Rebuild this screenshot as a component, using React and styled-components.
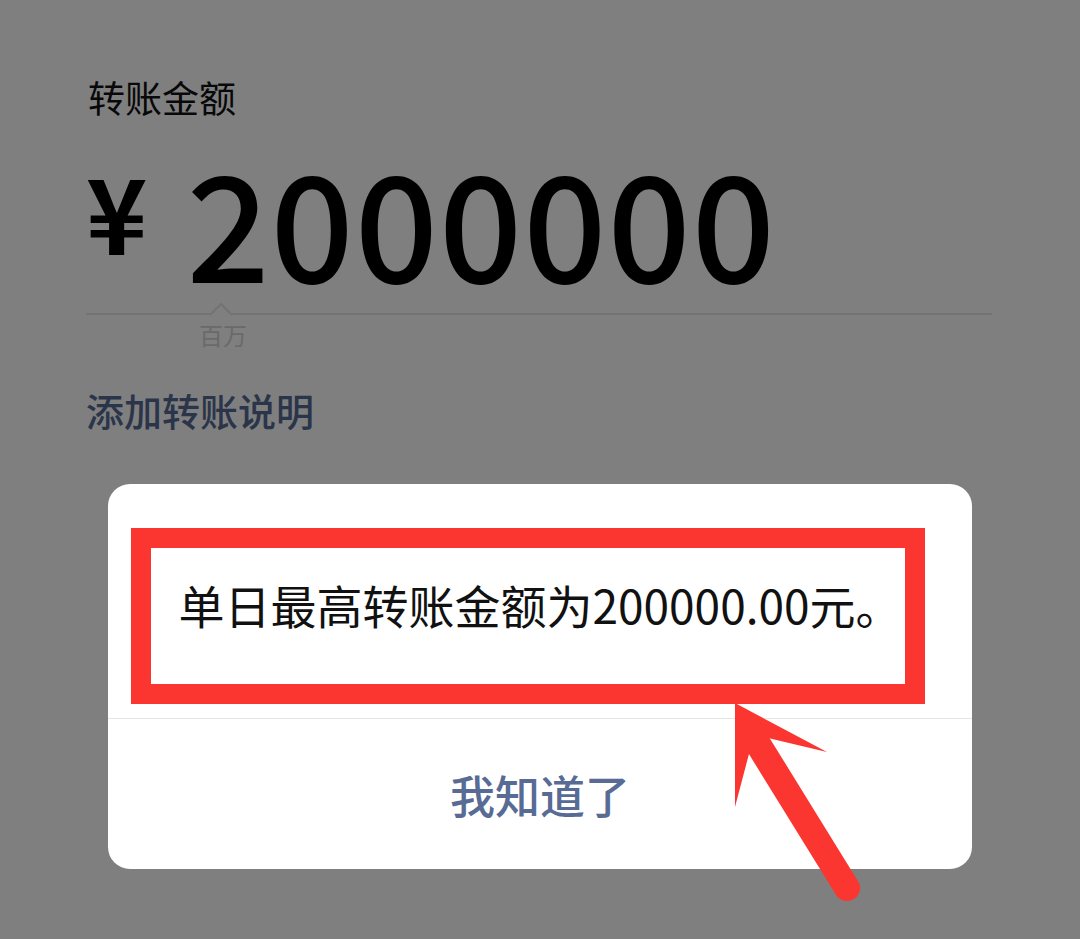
import styled, { createGlobalStyle } from 'styled-components';

const Global = createGlobalStyle`
  html, body {
    margin: 0;
    padding: 0;
    background: #808080;
  }
  body {
    font-family: "Noto Sans CJK SC", "Noto Sans", sans-serif;
  }
`

const Page = styled.div`
  position: relative;
  width: 1080px;
  height: 939px;
  overflow: hidden;
  background: #fff;
  box-sizing: border-box;
  padding: 79px 88px 0 86px;
`

const Label = styled.div`
  font-size: 37px;
  line-height: 1;
  color: #111;
  padding-left: 2px;
`

const AmountRow = styled.div`
  display: flex;
  align-items: flex-start;
  margin-top: 31px;
  gap: 39px;
`

const Currency = styled.span`
  font-size: 104px;
  line-height: 1;
  font-weight: 700;
  color: #000;
  margin-top: 11px;
`

const Amount = styled.span`
  font-size: 146px;
  line-height: 1;
  font-weight: 500;
  color: #000;
  letter-spacing: 1px;
`

const Rule = styled.div`
  position: relative;
  margin-top: 20px;
  border-top: 2px solid #e6e6e6;
`

const Notch = styled.svg`
  position: absolute;
  left: 124px;
  top: -12px;
`

const Unit = styled.div`
  font-size: 24px;
  line-height: 1;
  color: #d4d4d4;
  margin: 8px 0 0 113px;
`

const AddNote = styled.div`
  font-size: 38px;
  line-height: 1;
  font-weight: 500;
  color: #576b95;
  margin-top: 44px;
`

const Backdrop = styled.div`
  position: absolute;
  inset: 0;
  background: rgba(0, 0, 0, 0.5);
`

const Dialog = styled.div`
  position: absolute;
  left: 108px;
  top: 484px;
  width: 864px;
  height: 385px;
  background: #fff;
  border-radius: 22px;
  display: flex;
  flex-direction: column;
`

const Message = styled.div`
  position: relative;
  height: 235px;
  display: flex;
  align-items: center;
  justify-content: center;
  padding-top: 6px;
  box-sizing: border-box;
  border-bottom: 1px solid #e5e5e5;
  font-size: 46px;
  color: #111;
`

const Highlight = styled.div`
  position: absolute;
  left: 23px;
  right: 47px;
  top: 44px;
  bottom: 14px;
  border: 20px solid #fb3530;
`

const Action = styled.button`
  flex: 1;
  border: none;
  background: none;
  font-family: inherit;
  font-size: 45px;
  font-weight: 500;
  color: #576b95;
  padding: 0;
  cursor: pointer;
`

const Arrow = styled.svg`
  position: absolute;
  left: 0;
  top: 0;
  pointer-events: none;
`

export default function App() {
  return (
    <>
      <Global />
      <Page>
        <Label>转账金额</Label>
        <AmountRow>
          <Currency>¥</Currency>
          <Amount>2000000</Amount>
        </AmountRow>
        <Rule>
          <Notch width="22" height="14" viewBox="0 0 22 14">
            <path d="M0 12 L11 1 L22 12" fill="#fff" stroke="#e6e6e6" strokeWidth="2" />
          </Notch>
        </Rule>
        <Unit>百万</Unit>
        <AddNote>添加转账说明</AddNote>

        <Backdrop />
        <Dialog>
          <Message>
            单日最高转账金额为200000.00元。
            <Highlight />
          </Message>
          <Action>我知道了</Action>
        </Dialog>

        <Arrow width="1080" height="939" viewBox="0 0 1080 939">
          <line x1="758" y1="744" x2="847" y2="888" stroke="#fb3530" strokeWidth="26" strokeLinecap="round" />
          <polygon points="735,703 827,752 768,738 750,750 735,807" fill="#fb3530" />
        </Arrow>
      </Page>
    </>
  )
}
